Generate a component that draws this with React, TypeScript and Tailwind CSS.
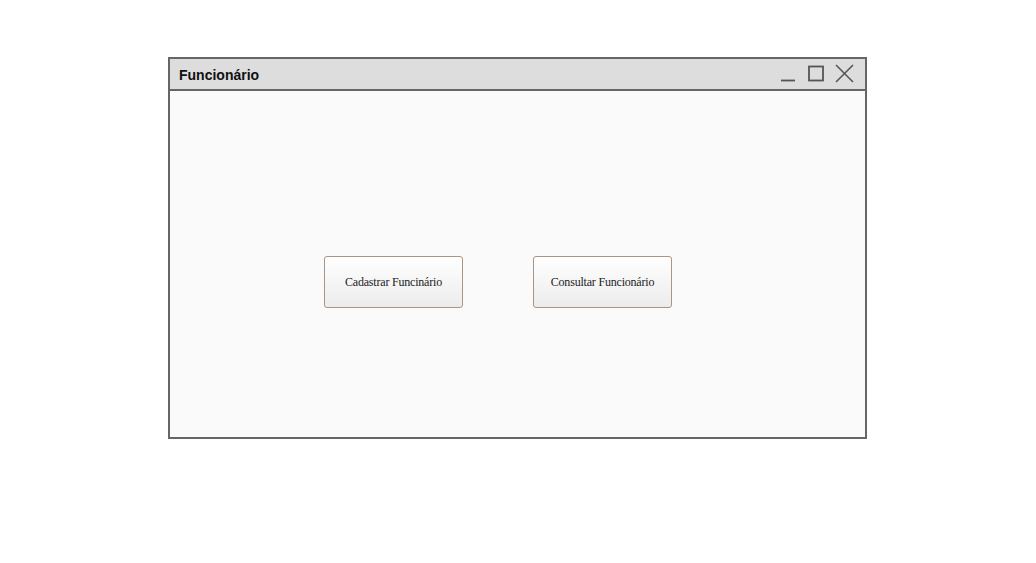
export default function App() {
  return (
    <div className="w-[1036px] h-[563px] bg-white pt-[57px] pl-[168px]">
      <div className="w-[699px] h-[382px] border-2 border-[#666666] bg-[#fafafa] flex flex-col">
        <div className="h-[32px] bg-[#dddddd] border-b-2 border-[#666666] flex items-center justify-between pl-[9px] pr-[10px]">
          <span className="mt-[2px] text-[14px] font-bold text-[#111111] font-['Liberation_Sans',Arial,sans-serif]">
            Funcionário
          </span>
          <svg width="74" height="20" viewBox="0 0 74 20" className="text-[#555555]">
            <line x1="0" y1="16.5" x2="14" y2="16.5" stroke="currentColor" strokeWidth="1.8" />
            <rect x="28" y="2.5" width="14" height="14" fill="none" stroke="currentColor" strokeWidth="1.8" />
            <line x1="55" y1="1" x2="72" y2="18" stroke="currentColor" strokeWidth="1.6" />
            <line x1="72" y1="1" x2="55" y2="18" stroke="currentColor" strokeWidth="1.6" />
          </svg>
        </div>
        <div className="flex-1 flex items-start pt-[165px] pl-[154px] gap-[70px]">
          <button className="w-[139px] h-[52px] rounded-[3px] border border-[#a89584] bg-gradient-to-b from-white to-[#ececec] text-[12px] tracking-[-0.2px] text-[#222222] font-['Liberation_Serif','Times_New_Roman',serif]">
            Cadastrar Funcinário
          </button>
          <button className="w-[139px] h-[52px] rounded-[3px] border border-[#a89584] bg-gradient-to-b from-white to-[#ececec] text-[12px] tracking-[-0.2px] text-[#222222] font-['Liberation_Serif','Times_New_Roman',serif]">
            Consultar Funcionário
          </button>
        </div>
      </div>
    </div>
  );
}
